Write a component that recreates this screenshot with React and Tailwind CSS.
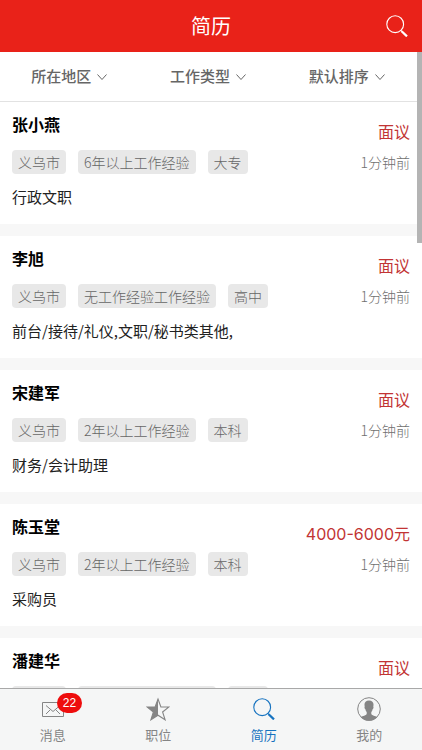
import React, { useState } from "react";

const resumes = [
  { id: 1, name: "张小燕", salary: "面议", tags: ["义乌市", "6年以上工作经验", "大专"], job: "行政文职", time: "1分钟前" },
  { id: 2, name: "李旭", salary: "面议", tags: ["义乌市", "无工作经验工作经验", "高中"], job: "前台/接待/礼仪,文职/秘书类其他,", time: "1分钟前" },
  { id: 3, name: "宋建军", salary: "面议", tags: ["义乌市", "2年以上工作经验", "本科"], job: "财务/会计助理", time: "1分钟前" },
  { id: 4, name: "陈玉堂", salary: "4000-6000元", tags: ["义乌市", "2年以上工作经验", "本科"], job: "采购员", time: "1分钟前" },
  { id: 5, name: "潘建华", salary: "面议", tags: ["义乌市", "无工作经验工作经验", "大专"], job: "普工", time: "1分钟前" },
];

const filters = ["所在地区", "工作类型", "默认排序"];

const SearchIcon = ({ className }) => (
  <svg className={className} viewBox="0 0 22 22" fill="none" stroke="currentColor" aria-hidden="true">
    <circle cx="9.2" cy="9.2" r="8.4" strokeWidth="1.1" />
    <path d="M14.6 15.2l1.4 1.4" strokeWidth="1.2" />
    <path d="M15.6 16.2l5.4 5.2" strokeWidth="2.2" />
  </svg>
);

const MailIcon = () => (
  <svg className="h-6 w-6" viewBox="0 0 24 24" fill="none" stroke="currentColor" aria-hidden="true">
    <path d="M1.5 5.5h21v14h-21z" />
    <path d="M5 8.5l7 6 7-6M5 17l4.5-4.5M19 17l-4.5-4.5" />
  </svg>
);

const StarIcon = () => (
  <svg className="h-6 w-6" viewBox="0 0 24 24" fill="none" stroke="currentColor" aria-hidden="true">
    <path d="M12 2l2.9 8h8l-6.3 5 2.5 7.8-7.1-4.6-7.1 4.6L7.4 15 1.1 10h8z" strokeWidth="1.1" />
    <path d="M12 2v16.2l-7.1 4.6L7.4 15 1.1 10h8z" fill="currentColor" stroke="none" />
  </svg>
);

const UserIcon = () => (
  <svg className="h-6 w-6" viewBox="0 0 24 24" aria-hidden="true">
    <circle cx="12" cy="12" r="11.3" fill="none" stroke="currentColor" />
    <path
      d="M12 3.4c-3.2 0-4.7 1.9-4.5 4.7l.2 1.7c-.5.6 0 2.2.7 2.5.2 1.3.7 2.2 1.3 2.8v1.8c-.6 1.7-3.9 1.7-6 3.3a11.3 11.3 0 0 0 16.6 0c-2.1-1.6-5.4-1.6-6-3.3v-1.8c.6-.6 1.1-1.5 1.3-2.8.7-.3 1.2-1.9.7-2.5l.2-1.7c.2-2.8-1.3-4.7-4.5-4.7z"
      fill="currentColor"
    />
  </svg>
);

const tabs = [
  { key: "message", label: "消息", icon: <MailIcon />, badge: 22 },
  { key: "job", label: "职位", icon: <StarIcon /> },
  { key: "resume", label: "简历", icon: <SearchIcon className="h-[22px] w-[22px]" /> },
  { key: "mine", label: "我的", icon: <UserIcon /> },
];

const ResumeCard = ({ item }) => (
  <li className="bg-white px-3 pt-2.5 pb-4">
    <div className="flex justify-between">
      <h2 className="text-base font-bold leading-6 text-black">{item.name}</h2>
      <p className="pt-2 font-['Inter','Noto_Sans_CJK_SC',sans-serif] text-base leading-6 text-[#c23434]">
        {item.salary}
      </p>
    </div>
    <div className="mt-1.5 flex items-center justify-between">
      <div className="flex gap-3">
        {item.tags.map((tag) => (
          <span key={tag} className="rounded bg-[#e8e8e8] px-1.5 text-sm font-light leading-6 text-[#666]">
            {tag}
          </span>
        ))}
      </div>
      <span className="text-sm font-light leading-6 text-[#707070]">{item.time}</span>
    </div>
    <p className="mt-3 text-[15px] leading-[22px] text-[#222]">{item.job}</p>
  </li>
);

const App = () => {
  const [active, setActive] = useState("resume");

  return (
    <div className="flex h-screen flex-col bg-white font-['Noto_Sans_CJK_SC',sans-serif]">
      <header className="grid h-[52px] shrink-0 grid-cols-[1fr_auto_1fr] items-center bg-[#e92219] px-3.5 text-white">
        <h1 className="col-start-2 text-xl font-normal leading-7">简历</h1>
        <button type="button" aria-label="搜索" className="justify-self-end">
          <SearchIcon className="h-[22px] w-[22px]" />
        </button>
      </header>

      <main className="relative min-h-0 flex-1">
        <div className="h-full overflow-y-auto bg-[#f7f7f7] [scrollbar-width:none]">
          <div className="grid h-[50px] grid-cols-3 border-b border-[#e2e2e2] bg-white pr-1.5">
            {filters.map((label) => (
              <button
                key={label}
                type="button"
                className="flex items-center justify-center gap-1.5 text-[15px] font-medium text-[#666]"
              >
                {label}
                <svg className="h-2.5 w-2.5" viewBox="0 0 10 10" fill="none" stroke="currentColor" aria-hidden="true">
                  <path d="M0.5 2.5L5 7.5l4.5-5" />
                </svg>
              </button>
            ))}
          </div>
          <ul className="flex flex-col gap-3">
            {resumes.map((item) => (
              <ResumeCard key={item.id} item={item} />
            ))}
          </ul>
        </div>
        {/* scroll thumb */}
        <div className="absolute top-0 right-0 h-[30%] w-[5px] bg-[#b4b4b4]" />
      </main>

      <nav className="grid h-[62px] shrink-0 grid-cols-4 border-t border-[#a8a8a8] bg-[#f5f6f6]">
        {tabs.map((tab) => (
          <button
            key={tab.key}
            type="button"
            onClick={() => setActive(tab.key)}
            className={`flex flex-col items-center pt-2 ${active === tab.key ? "text-[#1673c0]" : "text-[#858585]"}`}
          >
            <span className="relative flex h-6 w-6 items-center justify-center">
              {tab.icon}
              {tab.badge && (
                <span className="absolute -top-1 left-4 rounded-full bg-[#ee0d0d] px-1.5 font-['Liberation_Sans',sans-serif] text-xs leading-5 text-white">
                  {tab.badge}
                </span>
              )}
            </span>
            <span className="mt-1 text-[13px] leading-5">{tab.label}</span>
          </button>
        ))}
      </nav>
    </div>
  );
};

export default App;
